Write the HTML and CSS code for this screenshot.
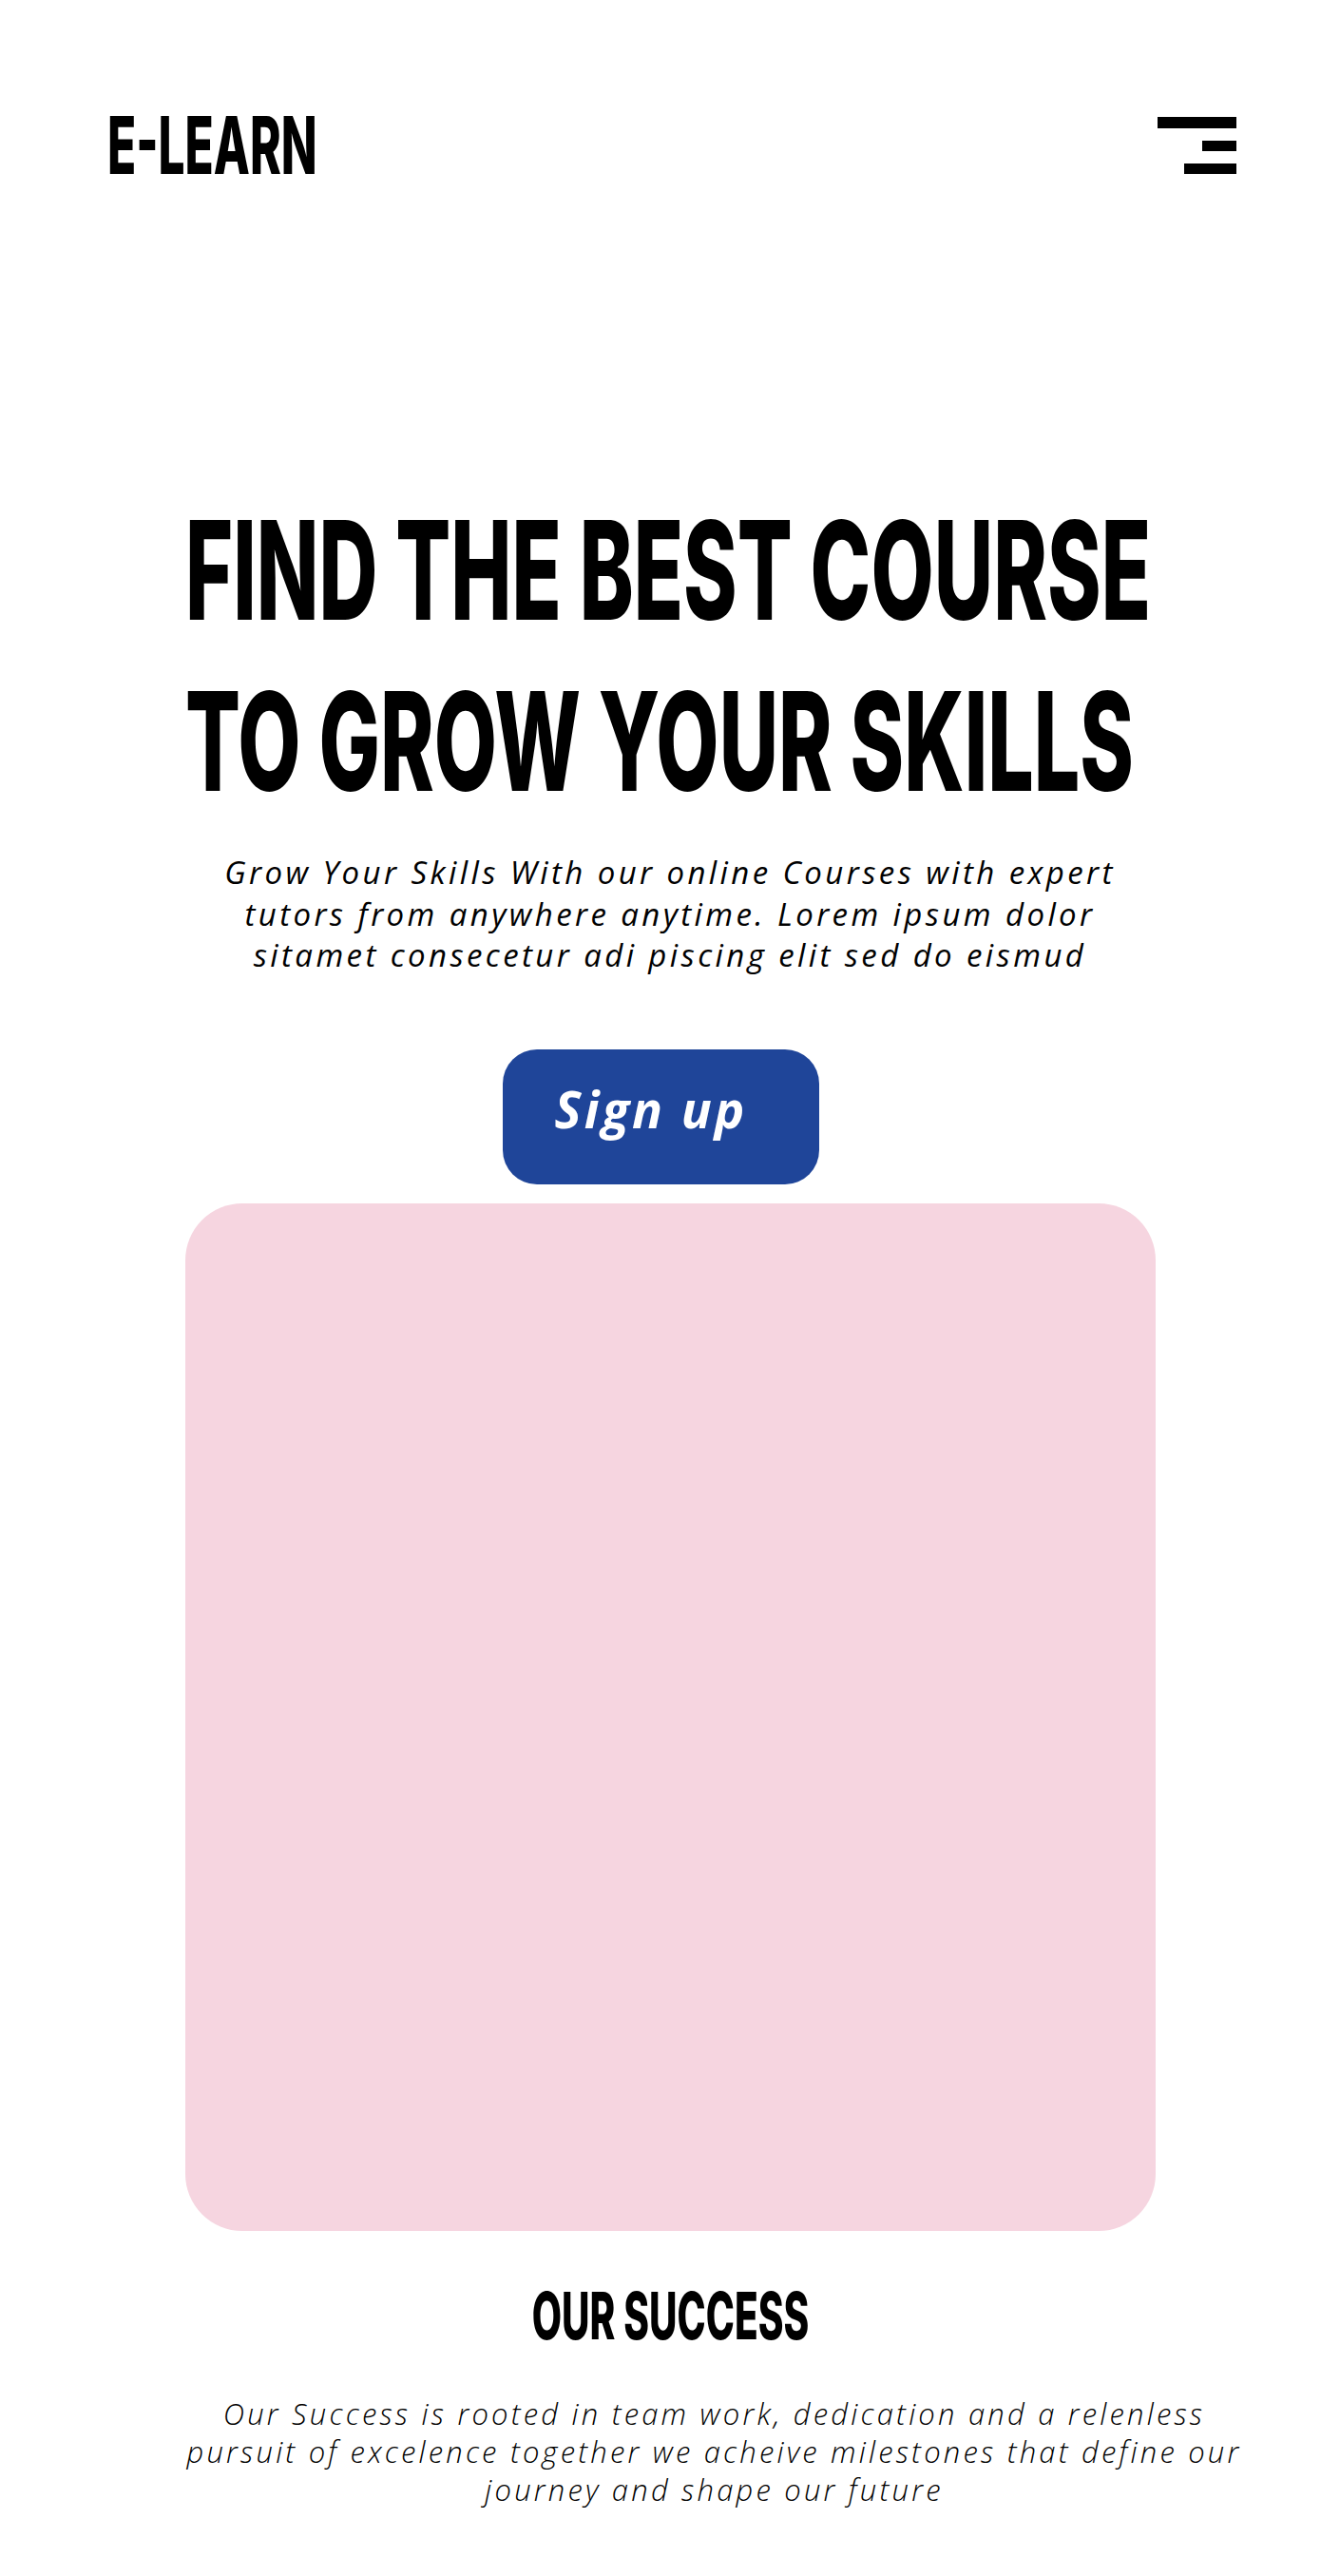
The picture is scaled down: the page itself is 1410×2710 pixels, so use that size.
FILE: index.html
```html
<!DOCTYPE html>
<html lang="en">
<head>
<meta charset="utf-8">
<title>E-Learn</title>
<link rel="stylesheet" href="styles.css">
</head>
<body>
<header class="site-header">
  <a class="logo" href="#">E-LEARN</a>
  <button class="menu-toggle" aria-label="Menu">
    <span class="bar bar-long"></span>
    <span class="bar bar-short"></span>
    <span class="bar bar-mid"></span>
  </button>
</header>

<main class="page">
  <section class="hero">
    <h1 class="hero-title">FIND THE BEST COURSE<br>TO GROW YOUR SKILLS</h1>
    <p class="hero-text">Grow Your Skills With our online Courses with expert<br>tutors from anywhere anytime. Lorem ipsum dolor<br>sitamet consecetur adi piscing elit sed do eismud</p>
    <div class="cta-row">
      <a class="btn-signup" href="#">Sign up</a>
    </div>
    <div class="hero-media"></div>
  </section>

  <section class="success">
    <h2 class="section-title">OUR SUCCESS</h2>
    <p class="success-text">Our Success is rooted in team work, dedication and a relenless<br>pursuit of excelence together we acheive milestones that define our<br>journey and shape our future</p>
  </section>
</main>
</body>
</html>
```

FILE: styles.css
```css
* {
  box-sizing: border-box;
}

html, body {
  margin: 0;
  padding: 0;
  background: #ffffff;
  overflow-x: hidden;
}

body {
  font-family: "Open Sans", "Liberation Sans", sans-serif;
  color: #000000;
}

.site-header {
  display: flex;
  justify-content: space-between;
  align-items: center;
  padding: 111px 109px 0 113px;
}

.logo {
  display: inline-block;
  font-family: "Inter", "Liberation Sans", sans-serif;
  font-weight: 800;
  font-size: 84px;
  line-height: 84px;
  color: #000;
  text-decoration: none;
  transform: scaleX(0.59);
  transform-origin: left center;
}

.menu-toggle {
  display: flex;
  flex-direction: column;
  align-items: flex-end;
  gap: 13px;
  padding: 0;
  border: 0;
  background: none;
  cursor: pointer;
}

.bar {
  display: block;
  height: 11px;
  background: #000;
}

.bar-long {
  width: 83px;
  height: 12px;
}

.bar-short {
  width: 36px;
}

.bar-mid {
  width: 55px;
}

.page {
  width: 1021px;
  margin: 0 auto;
}

.hero-title {
  margin: 315px 0 0;
  font-family: "Inter", "Liberation Sans", sans-serif;
  font-weight: 800;
  font-size: 144px;
  line-height: 180px;
  white-space: nowrap;
  transform: scaleX(0.596);
  transform-origin: left top;
}

.hero-text {
  margin: 26px 0 0;
  font-style: italic;
  font-weight: 400;
  font-size: 33px;
  line-height: 43.5px;
  letter-spacing: 3.4px;
  text-align: center;
  white-space: nowrap;
}

.cta-row {
  display: flex;
  justify-content: center;
  padding-right: 20px;
  margin-top: 77px;
}

.btn-signup {
  display: flex;
  align-items: center;
  justify-content: center;
  width: 333px;
  height: 142px;
  padding: 0 20px 16px 0;
  border-radius: 36px;
  background: #1f4599;
  color: #ffffff;
  font-style: italic;
  font-weight: 700;
  font-size: 53px;
  letter-spacing: 3px;
  text-decoration: none;
}

.hero-media {
  margin-top: 20px;
  height: 1081px;
  border-radius: 60px;
  background: #f6d5e0;
}

.success {
  padding-top: 55px;
}

.section-title {
  margin: 0;
  font-family: "Inter", "Liberation Sans", sans-serif;
  font-weight: 800;
  font-size: 69px;
  line-height: 69px;
  text-align: center;
  transform: scaleX(0.588);
}

.success-text {
  width: 1114px;
  margin: 48px 0 0;
  font-style: italic;
  font-weight: 300;
  font-size: 31px;
  line-height: 40px;
  letter-spacing: 3.2px;
  text-align: center;
  white-space: nowrap;
}
```
